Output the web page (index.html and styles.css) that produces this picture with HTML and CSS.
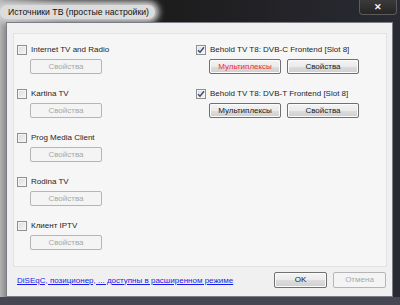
FILE: index.html
```html
<!DOCTYPE html>
<html lang="ru">
<head>
    <meta charset="UTF-8">
    <title>Источники ТВ (простые настройки)</title>
    <link rel="stylesheet" href="styles.css">
</head>
<body>
    <div class="window">
        <div class="titlebar">
            <span class="title">Источники ТВ (простые настройки)</span>
            <span class="close">&#x2715;</span>
        </div>
        <div class="client">
            <div class="panel">
                <div class="column">
                    <div class="source">
                        <label class="check-row"><span class="box"></span>Internet TV and Radio</label>
                        <div class="buttons"><span class="btn disabled">Свойства</span></div>
                    </div>
                    <div class="source">
                        <label class="check-row"><span class="box"></span>Kartina TV</label>
                        <div class="buttons"><span class="btn disabled">Свойства</span></div>
                    </div>
                    <div class="source">
                        <label class="check-row"><span class="box"></span>Prog Media Client</label>
                        <div class="buttons"><span class="btn disabled">Свойства</span></div>
                    </div>
                    <div class="source">
                        <label class="check-row"><span class="box"></span>Rodina TV</label>
                        <div class="buttons"><span class="btn disabled">Свойства</span></div>
                    </div>
                    <div class="source">
                        <label class="check-row"><span class="box"></span>Клиент IPTV</label>
                        <div class="buttons"><span class="btn disabled">Свойства</span></div>
                    </div>
                </div>
                <div class="column">
                    <div class="source">
                        <label class="check-row"><span class="box checked"><svg viewBox="0 0 8 8"><path d="M1 4.2 L3 6.3 L7 1.2" /></svg></span>Behold TV T8: DVB-C Frontend [Slot 8]</label>
                        <div class="buttons">
                            <span class="btn red">Мультиплексы</span>
                            <span class="btn">Свойства</span>
                        </div>
                    </div>
                    <div class="source">
                        <label class="check-row"><span class="box checked"><svg viewBox="0 0 8 8"><path d="M1 4.2 L3 6.3 L7 1.2" /></svg></span>Behold TV T8: DVB-T Frontend [Slot 8]</label>
                        <div class="buttons">
                            <span class="btn">Мультиплексы</span>
                            <span class="btn">Свойства</span>
                        </div>
                    </div>
                </div>
            </div>
            <div class="footer">
                <a class="link" href="#">DiSEqC, позиционер, ... доступны в расширенном режиме</a>
                <span class="btn dialog">OK</span>
                <span class="btn dialog disabled">Отмена</span>
            </div>
        </div>
    </div>
</body>
</html>
```

FILE: styles.css
```css
body {
    margin: 0;
    font-family: "Liberation Sans", Arial, sans-serif;
    font-size: 8px;
    color: #1e1e1e;
}
.window {
    width: 400px;
    height: 305px;
    box-sizing: border-box;
    padding: 0 7px 8px 6px;
    display: flex;
    flex-direction: column;
    background: linear-gradient(90deg, #b4b4b4 0, #8c8c8c 6px, #2e2e2e 60px, #1c1c1c 160px, #2a2a34 100%);
    box-shadow: inset 0 -8px 0 #474753;
}
.titlebar {
    height: 22px;
    display: flex;
    align-items: flex-start;
    justify-content: space-between;
    margin-left: -6px;
    margin-right: -7px;
}
.title {
    margin-top: 5px;
    padding: 2px 6px 2px 8px;
    font-size: 8.7px;
    color: #101010;
    background: #dcdcdc;
    border-radius: 8px;
    box-shadow: 0 0 6px 4px #d4d4d4;
}
.close {
    width: 36px;
    height: 14px;
    margin-right: 3px;
    border: 1px solid #5c5c5c;
    border-top: none;
    border-radius: 0 0 4px 4px;
    background: linear-gradient(#3a3a3a, #262626);
    color: #f4f4f4;
    font-size: 9px;
    font-weight: bold;
    text-align: center;
    line-height: 14px;
}
.client {
    flex: 1;
    background: #f0f0f0;
    border: 1px solid #7d7d85;
    display: flex;
    flex-direction: column;
}
.panel {
    margin: 10px 5px 0 6px;
    height: 234px;
    box-sizing: border-box;
    padding: 9px 0 0 3px;
    background: #f6f6f6;
    border: 1px solid #e2e2e2;
    display: grid;
    grid-template-columns: 179px 1fr;
}
.source {
    height: 44px;
}
.check-row {
    display: flex;
    align-items: center;
    height: 13px;
    gap: 4px;
    white-space: nowrap;
}
.box {
    width: 8px;
    height: 8px;
    border: 1px solid #8e8f8f;
    background: linear-gradient(135deg, #dcdcdc, #f6f6f6);
    box-shadow: inset 0 0 0 1px #f4f4f4;
    display: flex;
}
.box svg {
    width: 8px;
    height: 8px;
    fill: none;
    stroke: #3c4a7a;
    stroke-width: 1.4;
}
.buttons {
    display: flex;
    gap: 6px;
    margin: 3px 0 0 13px;
}
.btn {
    width: 70px;
    height: 13px;
    border: 1px solid #707070;
    border-radius: 2px;
    background: linear-gradient(#f4f4f4 0, #ebebeb 50%, #dddddd 51%, #cfcfcf 100%);
    text-align: center;
    line-height: 13px;
    color: #1a1a1a;
    box-shadow: inset 0 0 0 1px #fbfbfb;
}
.btn.red {
    color: #f02838;
}
.btn.disabled {
    border-color: #b5b5b5;
    background: #f4f4f4;
    color: #a8a8a8;
    box-shadow: none;
}
.footer {
    display: flex;
    align-items: center;
    margin: 5px 6px 0 10px;
    gap: 6px;
}
.link {
    flex: 1;
    color: #1a1aee;
    text-decoration: underline;
}
.btn.dialog {
    width: 51px;
    height: 14px;
    line-height: 14px;
}
```
